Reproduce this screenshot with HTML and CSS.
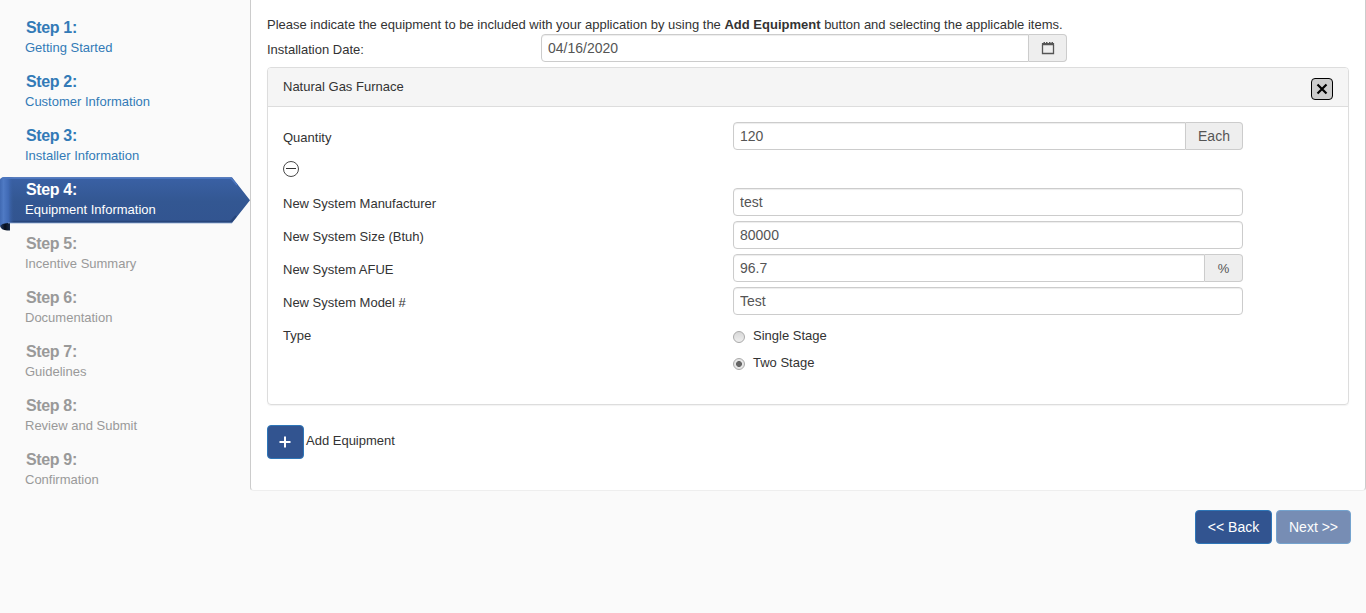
FILE: index.html
```html
<!DOCTYPE html>
<html lang="en">
<head>
<meta charset="utf-8">
<title>Equipment Information</title>
<link rel="stylesheet" href="styles.css">
</head>
<body>
<div class="layout">
  <nav class="steps">
    <a class="step done"><b>Step 1:</b><span>Getting Started</span></a>
    <a class="step done"><b>Step 2:</b><span>Customer Information</span></a>
    <a class="step done"><b>Step 3:</b><span>Installer Information</span></a>
    <a class="step current">
      <svg class="ribbon" width="250" height="54" viewBox="0 0 250 54">
        <defs>
          <linearGradient id="face" x1="0" y1="0" x2="0" y2="1"><stop offset="0" stop-color="#3a61a5"/><stop offset=".5" stop-color="#335792"/><stop offset="1" stop-color="#325490"/></linearGradient>
          <linearGradient id="curl" x1="0" y1="0" x2="1" y2="0"><stop offset="0" stop-color="#4069b2"/><stop offset=".25" stop-color="#4f7ac4"/><stop offset=".6" stop-color="#406ab5"/><stop offset="1" stop-color="#365b9b" stop-opacity="0"/></linearGradient>
          <linearGradient id="fold" x1="0" y1="0" x2="1" y2="0"><stop offset="0" stop-color="#233d69"/><stop offset=".5" stop-color="#060d19"/><stop offset="1" stop-color="#172946"/></linearGradient>
        </defs>
        <path d="M0 45H10V53.5H7Q1 53 0 49Z" fill="url(#fold)"/>
        <path d="M4 .3H232L250 23.3L232 46H8Q2 46 0 49V4Q0 .3 4 .3Z" fill="url(#face)"/>
        <path d="M9 44.7H231L236 39" fill="none" stroke="#27457a" stroke-width="2"/>
        <path d="M4 .3H14V46H8Q2 46 0 49V4Q0 .3 4 .3Z" fill="url(#curl)"/>
        <path d="M3 1.3H231L237 8" fill="none" stroke="#4c76bf" stroke-width="1.6"/>
        <path d="M8 46H232" fill="none" stroke="#8ba4cf" stroke-width=".8"/>
      </svg>
      <b>Step 4:</b><span>Equipment Information</span></a>
    <a class="step"><b>Step 5:</b><span>Incentive Summary</span></a>
    <a class="step"><b>Step 6:</b><span>Documentation</span></a>
    <a class="step"><b>Step 7:</b><span>Guidelines</span></a>
    <a class="step"><b>Step 8:</b><span>Review and Submit</span></a>
    <a class="step"><b>Step 9:</b><span>Confirmation</span></a>
  </nav>
  <main class="content">
    <p class="intro">Please indicate the equipment to be included with your application by using the <b>Add Equipment</b> button and selecting the applicable items.</p>
    <div class="date-row">
      <label>Installation Date:</label>
      <div class="group date"><input class="field" value="04/16/2020"><span class="addon cal"><svg width="14" height="14" viewBox="0 0 14 14"><path d="M1.5 4V12.5H12.5V4" fill="none" stroke="#555" stroke-width="1.3"/><path d="M.9 2H2.5V1H4V2H5V1H6.5V2H8V1H9.5V2H10.5V1H12V2H13.1V4.3H.9Z" fill="#555"/></svg></span></div>
    </div>
    <section class="panel">
      <header class="panel-head"><span>Natural Gas Furnace</span><button class="close" aria-label="Remove"><svg width="12" height="12" viewBox="0 0 12 12"><path d="M1.5 1.5L10.5 10.5M10.5 1.5L1.5 10.5" stroke="#000" stroke-width="2.2"/></svg></button></header>
      <div class="panel-body">
        <div class="row"><label>Quantity</label><div class="group"><input class="field" value="120"><span class="addon each">Each</span></div></div>
        <div class="toggle"><svg width="16" height="17" viewBox="0 0 16 17"><circle cx="8" cy="9" r="7.5" fill="none" stroke="#333" stroke-width=".9"/><path d="M3 8.5H13" stroke="#333"/></svg></div>
        <div class="row"><label>New System Manufacturer</label><div class="group"><input class="field" value="test"></div></div>
        <div class="row"><label>New System Size (Btuh)</label><div class="group"><input class="field" value="80000"></div></div>
        <div class="row"><label>New System AFUE</label><div class="group"><input class="field" value="96.7"><span class="addon percent">%</span></div></div>
        <div class="row"><label>New System Model #</label><div class="group"><input class="field" value="Test"></div></div>
        <div class="row type"><label>Type</label><div class="options">
          <label class="option"><i class="radio"></i>Single Stage</label>
          <label class="option"><i class="radio checked"></i>Two Stage</label>
        </div></div>
      </div>
    </section>
    <div class="add"><button class="btn plus" aria-label="Add Equipment"><svg width="13" height="12" viewBox="0 0 13 12"><path d="M6 .5V11.5M.5 6H11.5" stroke="#fff" stroke-width="2"/></svg></button><span>Add Equipment</span></div>
  </main>
</div>
<footer class="actions"><button class="btn">&lt;&lt; Back</button><button class="btn next">Next &gt;&gt;</button></footer>
</body>
</html>
```
FILE: styles.css
```css
* { box-sizing: border-box; }
body {
  margin: 0;
  background: #fafafa;
  color: #333;
  font: 13px/20px "Liberation Sans", Arial, sans-serif;
  overflow: hidden;
}
.layout { display: flex; height: 491px; }
.steps { width: 250px; padding-top: 15px; flex: none; }
.step { position: relative; display: flex; flex-direction: column; height: 54px; padding: 3px 0 0 25px; color: #999; }
.step b { font-size: 16px; line-height: 20px; padding-left: 1px; letter-spacing: -.35px; }
.step span { line-height: 20px; }
.done { color: #337ab7; }
.current { color: #fff; }
.current b, .current span { position: relative; }
.ribbon { position: absolute; left: 0; top: 0; }
.content {
  flex: 1;
  background: #fff;
  border: 1px solid #ccc;
  border-width: 0 1px 1px;
  border-bottom-color: #eee;
  border-radius: 0 0 4px 4px;
  padding: 15px 16px 0;
}
.intro { margin: 0; height: 19px; white-space: nowrap; }
.date-row { display: flex; height: 33px; }
.date-row > label { width: 274px; padding-top: 6px; }
.group { display: flex; width: 510px; height: 28px; }
.date { width: 526px; }
.field {
  flex: 1;
  min-width: 0;
  height: 28px;
  border: 1px solid #ccc;
  border-radius: 4px;
  padding: 0 6px 1px;
  color: #555;
  background: #fff;
  font: 14px "Liberation Sans", Arial, sans-serif;
  box-shadow: inset 0 1px 1px rgba(0, 0, 0, .075);
  outline: 0;
}
.field:not(:last-child) { border-radius: 4px 0 0 4px; }
.addon {
  display: flex;
  align-items: center;
  justify-content: center;
  border: 1px solid #ccc;
  border-left: 0;
  border-radius: 0 4px 4px 0;
  background: #eee;
  color: #555;
  font-size: 14px;
}
.cal { width: 38px; }
.each { width: 57px; }
.percent { width: 38px; font-size: 13px; padding-top: 1px; }
.panel { height: 338px; border: 1px solid #ddd; border-radius: 4px; box-shadow: 0 1px 1px rgba(0, 0, 0, .05); }
.panel-head {
  display: flex;
  justify-content: space-between;
  height: 39px;
  padding: 9px 15px 0;
  border-bottom: 1px solid #ddd;
  background: #f5f5f5;
  border-radius: 3px 3px 0 0;
}
.close {
  display: grid;
  place-items: center;
  width: 22px;
  height: 22px;
  margin-top: 1px;
  padding: 0;
  border: 1px solid #000;
  border-radius: 4px;
  background: #ccc;
}
.panel-body { padding: 15px 15px 0; }
.row { display: flex; height: 33px; }
.row > label { width: 450px; padding-top: 6px; }
.toggle { height: 33px; padding-top: 5px; }
.toggle svg { display: block; }
.options { display: flex; flex-direction: column; gap: 7px; padding-top: 6px; }
.option { display: flex; align-items: center; height: 20px; }
.radio {
  width: 12px;
  height: 12px;
  margin: 1px 8px 0 0;
  border: 1px solid #aaa;
  border-radius: 50%;
  background: linear-gradient(#d8d8d8, #eee);
}
.checked { background: radial-gradient(circle, #666 0 2.6px, #e6e6e6 3.3px); }
.add { display: flex; gap: 2px; margin-top: 20px; }
.add span { padding-top: 6px; }
.btn {
  display: grid;
  place-items: center;
  height: 34px;
  width: 77px;
  padding: 0;
  border: 1px solid #2e76b8;
  border-radius: 4px;
  background: #325490;
  color: #fff;
  font: 14px "Liberation Sans", Arial, sans-serif;
}
.plus { width: 37px; }
.next { width: 75px; opacity: .65; }
.actions { display: flex; justify-content: flex-end; gap: 4px; padding: 19px 15px 0; }
```
